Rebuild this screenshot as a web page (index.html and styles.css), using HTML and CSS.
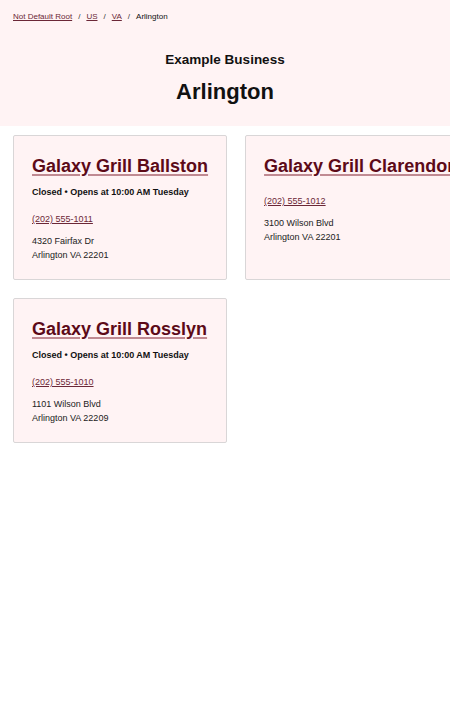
FILE: index.html
```html
<!DOCTYPE html>
<html lang="en">
<head>
<meta charset="utf-8">
<title>Arlington - Example Business</title>
<link rel="stylesheet" href="styles.css">
</head>
<body>
<header class="hero">
  <nav class="crumbs">
    <a href="#">Not Default Root</a>
    <span class="sep">/</span>
    <a href="#">US</a>
    <span class="sep">/</span>
    <a href="#">VA</a>
    <span class="sep">/</span>
    <span class="current">Arlington</span>
  </nav>
  <div class="brand">Example Business</div>
  <h1 class="city">Arlington</h1>
</header>
<main class="grid">
  <article class="card">
    <h2 class="card-title"><a href="#">Galaxy Grill Ballston</a></h2>
    <div class="hours">Closed • Opens at 10:00 AM Tuesday</div>
    <a class="phone" href="#">(202) 555-1011</a>
    <address class="addr">4320 Fairfax Dr<br>Arlington VA 22201</address>
  </article>
  <article class="card">
    <h2 class="card-title"><a href="#">Galaxy Grill Clarendon</a></h2>
    <a class="phone" href="#">(202) 555-1012</a>
    <address class="addr">3100 Wilson Blvd<br>Arlington VA 22201</address>
  </article>
  <article class="card">
    <h2 class="card-title"><a href="#">Galaxy Grill Rosslyn</a></h2>
    <div class="hours">Closed • Opens at 10:00 AM Tuesday</div>
    <a class="phone" href="#">(202) 555-1010</a>
    <address class="addr">1101 Wilson Blvd<br>Arlington VA 22209</address>
  </article>
</main>
</body>
</html>
```
FILE: styles.css
```css
html, body {
  margin: 0;
  padding: 0;
  overflow-x: hidden;
  background: #ffffff;
  font-family: "Liberation Sans", Arial, sans-serif;
  color: #111111;
}

.hero {
  background: #fff3f4;
  padding: 11px 13px 21px;
  display: flex;
  flex-direction: column;
}

.crumbs {
  display: flex;
  align-items: center;
  gap: 6px;
  font-size: 8px;
  line-height: 12px;
}

.crumbs a {
  color: #6b2737;
  text-decoration: underline;
}

.crumbs .sep {
  color: #333;
}

.crumbs .current {
  color: #111;
}

.brand {
  margin-top: 29px;
  text-align: center;
  font-size: 13.5px;
  line-height: 16px;
  font-weight: bold;
}

.city {
  margin: 11px 0 0;
  text-align: center;
  font-size: 22px;
  line-height: 26px;
  font-weight: bold;
}

.grid {
  display: grid;
  grid-template-columns: repeat(2, max-content);
  gap: 18px;
  padding: 9px 13px;
}

.card {
  background: #fff3f4;
  border: 1px solid #d9d6d7;
  border-radius: 2px;
  padding: 19px 18px 17px;
  display: flex;
  flex-direction: column;
  align-items: flex-start;
}

.card-title {
  margin: 0;
  font-size: 18px;
  line-height: 22px;
  font-weight: bold;
  white-space: nowrap;
}

.card-title a {
  color: #5c0a18;
  text-decoration: underline;
  text-decoration-color: #c08a92;
  text-decoration-thickness: 2px;
  text-underline-offset: 2px;
}

.hours {
  margin-top: 8px;
  font-size: 9px;
  line-height: 14px;
  font-weight: bold;
  color: #111;
}

.phone {
  font-size: 9px;
  line-height: 14px;
  color: #6b2737;
  text-decoration: underline;
}

.card-title + .phone {
  margin-top: 17px;
}

.hours + .phone {
  margin-top: 13px;
}

.addr {
  margin-top: 8px;
  font-style: normal;
  font-size: 9px;
  line-height: 14px;
  color: #222;
}
```
